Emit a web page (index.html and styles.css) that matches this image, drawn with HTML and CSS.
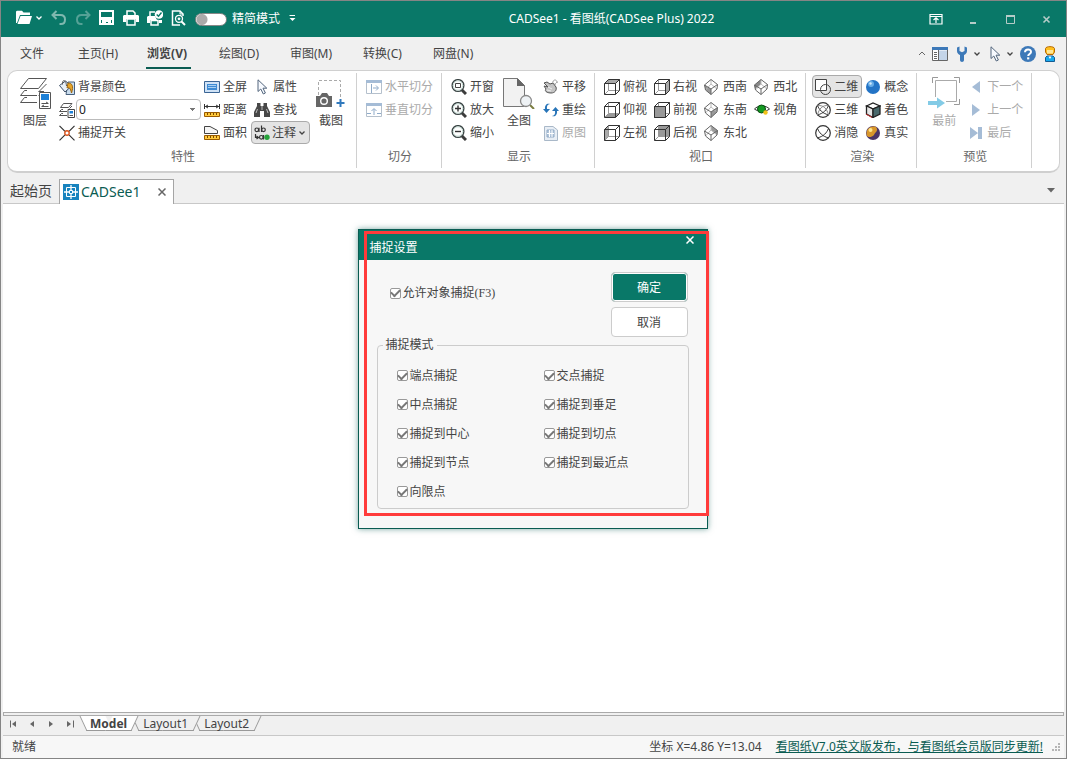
FILE: index.html
```html
<!DOCTYPE html>
<html lang="zh-CN">
<head>
<meta charset="utf-8">
<title>CADSee1 - 看图纸(CADSee Plus) 2022</title>
<link rel="stylesheet" href="styles.css">
</head>
<body>
<svg class="sprite" aria-hidden="true">
  <defs>
    <symbol id="cube" viewBox="0 0 16 16"><path d="M4.500 .5V11.500H15.500M4.500 11.500L.5 15.500" fill="none" stroke="#999"/><path d="M.5 4.500L4.500 .5H15.500V11.500L11.500 15.500H.5ZM.5 4.500H11.500V15.500M11.500 4.500L15.500 .5" fill="none" stroke="#333"/></symbol>
    <symbol id="iso" viewBox="0 0 16 16"><path d="M7 .5V5L1.500 11M7 5L13 10" fill="none" stroke="#bbb"/><path d="M.5 6L7 .5L13.500 5.500L13 10L7 15.500L1.500 11ZM.5 6L7 10L13.500 5.500M7 10V15.500" fill="none" stroke="#666"/></symbol>
    <symbol id="lens" viewBox="0 0 16 16"><path d="M10.500 10.500L15 15" stroke="#3c3c3c" stroke-width="3"/><circle cx="7" cy="6.500" r="5.900" fill="#fff" stroke="#3a4444" stroke-width="1.300"/><circle cx="7" cy="6.500" r="4.700" fill="none" stroke="#b9d4cc" stroke-width=".8"/></symbol>
    <symbol id="layers" viewBox="0 0 32 32"><path d="M9.500 1.500H27.500L19.500 11.500H1.500ZM8 13.500H5.500L1.500 18.500H18M27.500 7L20 14.500M8 20.500H5.500L1.500 25.500H18" fill="#fff" stroke="#555"/><path d="M19.500 14.500L25 14.500M19.500 18.500L21 17" stroke="#555"/></symbol>
    <symbol id="ruler" viewBox="0 0 16 16"><path d="M.5 10.500H15.500V14.500H.5Z" fill="#ffc93c" stroke="#9a5b00"/><path d="M3.500 11V13M6.500 11V13M9.500 11V13M12.500 11V13" stroke="#7b4a00"/></symbol>
    <symbol id="cursor" viewBox="0 0 16 16"><path d="M4 .8V12.500L6.800 10L9.300 15L11.400 14L9 9.200H12.800Z" fill="#f7faff" stroke="#52657c"/></symbol>
    <symbol id="sphere-net" viewBox="0 0 16 16"><circle cx="8" cy="8" r="7.300" fill="#fff" stroke="#333" stroke-width="1.200"/><path d="M2.500 3.500C4.500 8 7 11 13.500 13M13.500 3.500C11.500 8 9 11 2.500 13" fill="none" stroke="#333"/></symbol>
    <symbol id="down" viewBox="0 0 8 8"><path d="M1.500 2.500L4 5L6.500 2.500" fill="none" stroke="currentColor" stroke-width="1.300"/></symbol>
  </defs>
</svg>

<div class="window">
  <header class="titlebar">
    <div class="quick">
      <button class="tool open" aria-label="打开"><svg class="i16" viewBox="0 0 16 16"><path d="M0 2V1.500L1 .8H6L7.500 2.500H14V5H4L1 13H0Z" fill="#fff"/><path d="M4.500 6H16L13.500 14H1.500Z" fill="#fff"/></svg><svg class="i8"><use href="#down"/></svg></button>
      <button class="tool" aria-label="撤销"><svg class="i16" viewBox="0 0 16 16"><path d="M5.500 1L1.500 5L5.500 9M2 5H9.500C12.500 5 14 7 14 9.500C14 12 12.500 14 10 14H8.500" fill="none" stroke="#7fb8af" stroke-width="2"/></svg></button>
      <button class="tool" aria-label="重做"><svg class="i16" viewBox="0 0 16 16"><path d="M10.500 1L14.500 5L10.500 9M14 5H6.500C3.500 5 2 7 2 9.500C2 12 3.500 14 6 14H7.500" fill="none" stroke="#55a196" stroke-width="2"/></svg></button>
      <button class="tool" aria-label="保存"><svg class="i16" viewBox="0 0 16 16"><path d="M1 1H14V14H1Z" fill="none" stroke="#fff" stroke-width="2"/><path d="M1 7H14V10H1ZM3 9H12V15H9V12H7V15H3Z" fill="#fff"/></svg></button>
      <button class="tool" aria-label="打印"><svg class="i16" viewBox="0 0 16 16"><path d="M4 5V1H10L12 3V5" fill="none" stroke="#fff" stroke-width="1.500"/><path d="M1 5H15L16 6V12H13V9H3V12H0V6Z" fill="#fff"/><path d="M4 9H12V15H4Z" fill="none" stroke="#fff" stroke-width="1.500"/></svg></button>
      <button class="tool" aria-label="批量打印"><svg class="i16" viewBox="0 0 16 16"><path d="M3 6V2H8" fill="none" stroke="#fff" stroke-width="1.500"/><path d="M1 6H8L10 10H15V13H12V10H3V13H0V7Z" fill="#fff"/><path d="M4 10.500H11V15H4Z" fill="#097868" stroke="#fff" stroke-width="1.500"/><circle cx="12" cy="4.500" r="4.300" fill="#fff"/><path d="M9.700 4.500L11.500 6.300L14.500 2.500" fill="none" stroke="#097868" stroke-width="1.400"/></svg></button>
      <button class="tool" aria-label="打印预览"><svg class="i16" viewBox="0 0 16 16"><path d="M9 15H1.500V1H9L12 4V6" fill="none" stroke="#fff" stroke-width="1.500"/><path d="M9 1V4H12" fill="none" stroke="#fff"/><circle cx="8" cy="8.800" r="3.500" fill="none" stroke="#fff" stroke-width="1.300"/><circle cx="8" cy="8.800" r="1.400" fill="#fff"/><path d="M10.500 11.500L14 15" stroke="#fff" stroke-width="2"/></svg></button>
      <label class="switch"><input type="checkbox" role="switch">精简模式</label>
      <button class="tool" aria-label="自定义"><svg class="i8" viewBox="0 0 8 8"><path d="M1.500 1.500H7" stroke="#fff"/><path d="M1.500 4H7.500L4.500 7Z" fill="#fff"/></svg></button>
    </div>
    <h1 class="title">CADSee1 - 看图纸(CADSee Plus) 2022</h1>
    <div class="controls">
      <button aria-label="功能区选项"><svg class="i16" viewBox="0 0 16 16"><path d="M2 3.500H14V13H2ZM2 5.500H14M8 12V7M5.500 9L8 6.700L10.500 9" fill="none" stroke="#fff" stroke-width="1.200"/></svg></button>
      <button aria-label="最小化"><svg class="i16" viewBox="0 0 16 16"><path d="M5 12H11" stroke="#b5ccc8" stroke-width="2"/></svg></button>
      <button aria-label="最大化"><svg class="i16" viewBox="0 0 16 16"><path d="M4.500 5.500H12.500V12.500H4.500Z" fill="none" stroke="#b5ccc8"/><path d="M4 5H13" stroke="#b5ccc8" stroke-width="2"/></svg></button>
      <button aria-label="关闭"><svg class="i16" viewBox="0 0 16 16"><path d="M4.500 5.500L10.500 11.500M10.500 5.500L4.500 11.500" stroke="#b5ccc8" stroke-width="1.600"/></svg></button>
    </div>
  </header>

  <nav class="menubar">
    <button class="menu file">文件</button>
    <button class="menu">主页(H)</button>
    <button class="menu active">浏览(V)</button>
    <button class="menu">绘图(D)</button>
    <button class="menu">审图(M)</button>
    <button class="menu">转换(C)</button>
    <button class="menu">网盘(N)</button>
    <div class="menu-tools">
      <button aria-label="折叠功能区"><svg class="i8" viewBox="0 0 8 8"><path d="M1 5L4 2L7 5" fill="none" stroke="#666"/></svg></button>
      <button aria-label="面板"><svg class="i16" viewBox="0 0 16 16"><path d="M.5 1.500H15.500V14.500H.5Z" fill="#fff" stroke="#666"/><path d="M0 1H16V4H0Z" fill="#3d79b8"/><path d="M7 4.500H15V14H7Z" fill="#c4d5e9"/><path d="M2 6.500H5M2 8.500H5M2 10.500H5M2 12.500H5M6.500 4V14" stroke="#666"/></svg></button>
      <button aria-label="工具"><svg class="i16" viewBox="0 0 16 16"><path d="M3 1.500V5C3 7 4.500 8.500 6 9V14C6 16.500 10 16.500 10 14V9C11.500 8.500 13 7 13 5V1.500L10.500 .5V5L8 6.300L5.500 5V.5Z" fill="#3d79b8"/></svg><svg class="i8"><use href="#down"/></svg></button>
      <button aria-label="选择"><svg class="i16"><use href="#cursor"/></svg><svg class="i8"><use href="#down"/></svg></button>
      <button aria-label="帮助"><svg class="i16" viewBox="0 0 16 16"><circle cx="8" cy="8" r="8" fill="#3d79b8"/><path d="M5 6.200C5 2.400 11.200 2.600 11 6C10.900 8 8.200 8 8.200 10" fill="none" stroke="#fff" stroke-width="2"/><path d="M7.100 11.300H9.300V13.400H7.100Z" fill="#fff"/></svg></button>
      <button aria-label="用户"><svg class="i16" viewBox="0 0 16 16"><path d="M3.500 2.500C4 0 12 0 12.500 2.500V6L11 8.500H5L3.500 6Z" fill="#ffc020" stroke="#b86a00"/><path d="M5 4H11V7.500H5Z" fill="#ffe798"/><path d="M5 10H11L12.500 11.500V15.500H3.500V11.500Z" fill="#18a9ee" stroke="#145c92"/><path d="M6.500 10.500H9.500L8 13Z" fill="#fff"/></svg></button>
    </div>
  </nav>

  <section class="ribbon" aria-label="浏览">
    <div class="group">
      <div class="cols">
        <button class="big"><svg class="i32" viewBox="0 0 32 32"><use href="#layers"/><path d="M20.500 15.500H31.500V31.500H20.500Z" fill="#fff" stroke="#555"/><path d="M22 17H30V23H22Z" fill="#1c7fd6"/><path d="M22.500 26.500H29M27 25L29.500 26.500M29.500 29.500H23M25 28L22.500 29.500" fill="none" stroke="#555"/></svg>图层</button>
        <div class="col props">
          <button class="cmd"><svg class="i16" viewBox="0 0 16 16"><path d="M9 3H15.500V15.500H7Z" fill="#c9dced" stroke="#48617d"/><path d="M.5 6.500L6.500 2L12.500 7L6 13Z" fill="#e8f0f8" stroke="#3c4e66"/><path d="M3.500 5.500C3 0 7 0 7.500 7" fill="none" stroke="#555"/><path d="M9 4C13 4 15 7 12.500 14C11.500 9 10 8 8 9Z" fill="#e6a428" stroke="#9a6510"/></svg>背景颜色</button>
          <label class="layer"><svg class="i16" viewBox="0 0 16 16"><path d="M4.500 1.500H13L9.500 5.500H1.500ZM4 7.500H2.500L.5 9.500H8M4 11.500H2.500L.5 13.500H8M13 4L10.500 6.500" fill="none" stroke="#555"/><path d="M9 7.500H15.500V15.500H9Z" fill="#fff" stroke="#444"/><path d="M10.500 9H14V11.500H10.500Z" fill="#1c7fd6"/><path d="M10.500 13.500H14" stroke="#555"/></svg><select class="layer-select" aria-label="图层"><option>0</option></select></label>
          <button class="cmd"><svg class="i16" viewBox="0 0 16 16"><path d="M.5 .8L6 6.300M15.500 .8L10 6.300M.5 15.300L6 9.800M15.500 15.300L10 9.800" stroke="#333" stroke-width="1.200"/><circle cx="8" cy="8" r="2.200" fill="#fff" stroke="#d9541e" stroke-width="1.400"/></svg>捕捉开关</button>
        </div>
        <div class="col">
          <button class="cmd"><svg class="i16" viewBox="0 0 16 16"><path d="M.5 2.500H15.500V13.500H.5Z" fill="#cfe2f6" stroke="#3a6595"/><path d="M3 5H13V11H3Z" fill="#3d8ad4"/><path d="M4 6.500H12M4 8.500H12" stroke="#a9d0f2"/></svg>全屏</button>
          <button class="cmd"><svg class="i16" viewBox="0 0 16 16"><use href="#ruler"/><path d="M.5 2V7M15.500 2V7M1 4.500H15M4 3L1.500 4.500L4 6M12 3L14.500 4.500L12 6" fill="none" stroke="#333"/></svg>距离</button>
          <button class="cmd"><svg class="i16" viewBox="0 0 16 16"><use href="#ruler"/><path d="M.5 8.500V1.500H6L13.500 5.500V8.500Z" fill="#f5f5f5" stroke="#444"/></svg>面积</button>
        </div>
        <div class="col">
          <button class="cmd"><svg class="i16"><use href="#cursor"/></svg>属性</button>
          <button class="cmd"><svg class="i16" viewBox="0 0 16 16"><path d="M3 1H6.500V4H9.500V1H13V4L16 10V15H10V9H6V15H0V10L3 4Z" fill="#484848"/><path d="M3.500 7L2 11M12.500 7L14 11M8 4V8" stroke="#bbb"/></svg>查找</button>
          <button class="cmd pressed note"><svg class="i16" viewBox="0 0 16 16"><g fill="none" stroke="#333" stroke-width="1.200"><circle cx="2.800" cy="4.800" r="1.800"/><path d="M5 2.800V7"/><path d="M7.500 .5V7"/><circle cx="9.500" cy="4.800" r="1.800"/><circle cx="7.300" cy="12.300" r="1.800"/><path d="M9.500 10V14.500M1.500 9V12.500H4M2.500 11L4.500 12.500L2.500 14"/></g><circle cx="13" cy="12.300" r="2.700" fill="#26a33a"/></svg>注释<svg class="i8"><use href="#down"/></svg></button>
        </div>
        <button class="big"><svg class="i32" viewBox="0 0 32 32"><path d="M3.500 18V3.500H25.500V22" fill="none" stroke="#aaa" stroke-dasharray="3 2"/><path d="M1 19H5L7 16H12L14 19H17V30H1Z" fill="#666"/><circle cx="9" cy="24" r="3.300" fill="#666" stroke="#fff" stroke-width="1.400"/><path d="M25.500 22V30M21.500 26H29.500" stroke="#3079bd" stroke-width="2"/></svg>截图</button>
      </div>
      <h2>特性</h2>
    </div>

    <div class="group">
      <div class="cols">
        <div class="col">
          <button class="cmd" disabled><svg class="i16" viewBox="0 0 16 16"><path d="M.5 1.500H15.500V14.500H.5Z" fill="#fff" stroke="#b5c0cc"/><path d="M0 1H16V4H0Z" fill="#a5bcd6"/><path d="M5.500 5V14M7 9H12M10 6.500L12.500 9L10 11.500" fill="none" stroke="#8fabc9"/></svg>水平切分</button>
          <button class="cmd" disabled><svg class="i16" viewBox="0 0 16 16"><path d="M.5 1.500H15.500V14.500H.5Z" fill="#fff" stroke="#b5c0cc"/><path d="M0 1H16V4H0Z" fill="#a5bcd6"/><path d="M1 11.500H5M11 11.500H15M8 13V7M5.500 9L8 6.500L10.500 9" fill="none" stroke="#8fabc9"/></svg>垂直切分</button>
        </div>
      </div>
      <h2>切分</h2>
    </div>

    <div class="group">
      <div class="cols">
        <div class="col">
          <button class="cmd"><svg class="i16" viewBox="0 0 16 16"><use href="#lens"/><path d="M4.500 4.500H9.500V8.500H4.500Z" fill="none" stroke="#444"/></svg>开窗</button>
          <button class="cmd"><svg class="i16" viewBox="0 0 16 16"><use href="#lens"/><path d="M4 6.500H10M7 3.500V9.500" stroke="#333" stroke-width="1.400"/></svg>放大</button>
          <button class="cmd"><svg class="i16" viewBox="0 0 16 16"><use href="#lens"/><path d="M4 6.500H10" stroke="#333" stroke-width="1.400"/></svg>缩小</button>
        </div>
        <button class="big"><svg class="i32" viewBox="0 0 32 32"><path d="M.5 1.500H14.500L21.500 8.500V29.500H.5Z" fill="#f2f2f2" stroke="#777"/><path d="M14 1L22 9H14Z" fill="#666"/><path d="M27 28L31 32" stroke="#7b7d40" stroke-width="2"/><circle cx="23" cy="24" r="5.500" fill="#eef2f5" stroke="#888" stroke-width="1.300"/></svg>全图</button>
        <div class="col">
          <button class="cmd"><svg class="i16" viewBox="0 0 16 16"><path d="M1 4L4 3L7 5L10 4L13 8C14 11 12 14 8 14C4 14 1 12 3 10L1 7L5 8Z" fill="#c4c4c4" stroke="#555"/><path d="M5 8L9 10M4 11L8 12" stroke="#eee"/><circle cx="12" cy="3" r="2" fill="#fff" stroke="#555" stroke-dasharray="1 1"/></svg>平移</button>
          <button class="cmd"><svg class="i16" viewBox="0 0 16 16"><path d="M7 2C4.500 2.500 3.500 4 4 7H7L3.500 11L0 7H2C1.500 3 4 1 7 2ZM9 14C11.500 13.500 12.500 12 12 9H9L12.500 5L16 9H14C14.500 13 12 15 9 14Z" fill="#2774b8"/></svg>重绘</button>
          <button class="cmd" disabled><svg class="i16" viewBox="0 0 16 16"><path d="M1.500 1.500H10L14.500 5V15.500H1.500Z" fill="#e8eef5" stroke="#a9b8c8"/><path d="M4 5H11V12H4Z" fill="#b3c6db" stroke="#93acc7"/><path d="M6.500 5V12M9 5V12M4 8.500H11" stroke="#fff"/></svg>原图</button>
        </div>
      </div>
      <h2>显示</h2>
    </div>

    <div class="group">
      <div class="cols">
        <div class="col">
          <button class="cmd"><svg class="i16" viewBox="0 0 16 16"><path d="M.5 4.500L4.500 .5H15.500L11.500 4.500Z" fill="#aaa"/><use href="#cube"/></svg>俯视</button>
          <button class="cmd"><svg class="i16" viewBox="0 0 16 16"><path d="M.5 15.500L4.500 11.500H15.500L11.500 15.500Z" fill="#999"/><use href="#cube"/></svg>仰视</button>
          <button class="cmd"><svg class="i16" viewBox="0 0 16 16"><path d="M.5 4.500L4.500 .5V11.500L.5 15.500Z" fill="#aaa"/><use href="#cube"/></svg>左视</button>
        </div>
        <div class="col">
          <button class="cmd"><svg class="i16" viewBox="0 0 16 16"><path d="M11.500 4.500L15.500 .5V11.500L11.500 15.500Z" fill="#aaa"/><use href="#cube"/></svg>右视</button>
          <button class="cmd"><svg class="i16" viewBox="0 0 16 16"><use href="#cube"/><path d="M.5 4.500H11.500V15.500H.5Z" fill="#999" stroke="#333"/></svg>前视</button>
          <button class="cmd"><svg class="i16" viewBox="0 0 16 16"><path d="M4.500 .5H15.500V11.500H4.500Z" fill="#999"/><use href="#cube"/></svg>后视</button>
        </div>
        <div class="col">
          <button class="cmd"><svg class="i16" viewBox="0 0 16 16"><path d="M.5 6L7 10V15.500L1.500 11Z" fill="#999"/><use href="#iso"/></svg>西南</button>
          <button class="cmd"><svg class="i16" viewBox="0 0 16 16"><path d="M13.500 5.500L7 10V15.500L13 10Z" fill="#999"/><use href="#iso"/></svg>东南</button>
          <button class="cmd"><svg class="i16" viewBox="0 0 16 16"><path d="M7 .5L13.500 5.500L13 10L7 5Z" fill="#999"/><use href="#iso"/></svg>东北</button>
        </div>
        <div class="col">
          <button class="cmd"><svg class="i16" viewBox="0 0 16 16"><path d="M7 .5L.5 6L1 10L7 5Z" fill="#888"/><use href="#iso"/></svg>西北</button>
          <button class="cmd"><svg class="i16" viewBox="0 0 16 16"><path d="M.5 7C4 3 12 3 15.500 7C12 10 4 10 .5 7Z" fill="#fff" stroke="#333"/><circle cx="7.500" cy="7" r="4" fill="#149a22" stroke="#0a4d12"/><circle cx="11.500" cy="10.500" r="2.200" fill="#f2c21a"/></svg>视角</button>
        </div>
      </div>
      <h2>视口</h2>
    </div>

    <div class="group">
      <div class="cols">
        <div class="col">
          <button class="cmd pressed"><svg class="i16" viewBox="0 0 16 16"><path d="M.5 .5H11.500V11.500H.5Z" fill="#fff" stroke="#444"/><circle cx="10.500" cy="10.500" r="5" fill="none" stroke="#444"/></svg>二维</button>
          <button class="cmd"><svg class="i16" viewBox="0 0 16 16"><use href="#sphere-net"/><path d="M2.500 13C4 7 7 3 13.500 3.500M13.500 13C12 7 9 3 2.500 3.500" fill="none" stroke="#888"/></svg>三维</button>
          <button class="cmd"><svg class="i16"><use href="#sphere-net"/></svg>消隐</button>
        </div>
        <div class="col">
          <button class="cmd"><svg class="i16" viewBox="0 0 16 16"><circle cx="8" cy="8" r="7" fill="#2374c6"/><circle cx="6" cy="5" r="3" fill="#69aee8"/><circle cx="5.500" cy="4.500" r="1.200" fill="#d3e9fb"/></svg>概念</button>
          <button class="cmd"><svg class="i16" viewBox="0 0 16 16"><path d="M1.500 4L8 1L15 4L8 7Z" fill="#fff" stroke="#222" stroke-width="1.300"/><path d="M1.500 4V12L8 15.500V7Z" fill="#e5e5e5" stroke="#222" stroke-width="1.300"/><path d="M15 4V12L8 15.500V7Z" fill="#49686b" stroke="#222" stroke-width="1.300"/><path d="M1 12L7 15.500" stroke="#c63131"/></svg>着色</button>
          <button class="cmd"><svg class="i16" viewBox="0 0 16 16"><circle cx="8" cy="8" r="7" fill="#4b3568"/><path d="M2 11C0 5 5 0 11 2C14 6 10 7 9 10C6 13 3 12 2 11Z" fill="#d8962b"/><circle cx="5.500" cy="5" r="2" fill="#ffe58c"/></svg>真实</button>
        </div>
      </div>
      <h2>渲染</h2>
    </div>

    <div class="group">
      <div class="cols">
        <button class="big" disabled><svg class="i32" viewBox="0 0 32 32"><path d="M4.500 6V.5H10M26 .5H31.500V6M31.500 22V27.500H26" fill="none" stroke="#999"/><path d="M7.500 20V3.500H28.500V24.500H18" fill="none" stroke="#aaa"/><path d="M0 24H9V20.500L17 26L9 31.500V28H0Z" fill="#83cbe6"/></svg>最前</button>
        <div class="col">
          <button class="cmd" disabled><svg class="i16" viewBox="0 0 16 16"><path d="M12 2V14L4 8Z" fill="#a5bcd6"/></svg>下一个</button>
          <button class="cmd" disabled><svg class="i16" viewBox="0 0 16 16"><path d="M4 2V14L12 8Z" fill="#a5bcd6"/></svg>上一个</button>
          <button class="cmd" disabled><svg class="i16" viewBox="0 0 16 16"><path d="M2 2V14L10 8ZM10 2H14V14H10Z" fill="#a5bcd6"/></svg>最后</button>
        </div>
      </div>
      <h2>预览</h2>
    </div>
  </section>

  <nav class="doc-tabs">
    <button class="doc-tab">起始页</button>
    <div class="doc-tab current"><button class="doc-name"><svg class="i16" viewBox="0 0 16 16"><path d="M0 0H16V16H0Z" fill="#1783be"/><path d="M3.500 3.500H12.500V12.500H3.500Z" fill="none" stroke="#fff"/><path d="M8 1V6M8 10V15M1 8H6M10 8H15" stroke="#fff" stroke-width="1.300" stroke-dasharray="2 1"/><path d="M6.500 6.500H9.500V9.500H6.500Z" fill="#1783be" stroke="#fff"/></svg>CADSee1</button><button class="doc-close" aria-label="关闭标签"><svg class="i8" viewBox="0 0 8 8"><path d="M.5 .5L7.500 7.500M7.500 .5L.5 7.500" stroke="#666" stroke-width="1.500"/></svg></button></div>
    <button class="doc-list" aria-label="文档列表"><svg class="i8" viewBox="0 0 8 8"><path d="M0 2H8L4 6.500Z" fill="#666"/></svg></button>
  </nav>

  <main class="canvas">
    <form class="dialog" role="dialog" aria-labelledby="snap-title">
      <div class="dialog-head"><h2 id="snap-title">捕捉设置</h2><button type="button" class="dialog-close" aria-label="关闭"><svg class="i8" viewBox="0 0 8 8"><path d="M.5 .5L7.500 7.500M7.500 .5L.5 7.500" stroke="#fff" stroke-width="1.500"/></svg></button></div>
      <div class="dialog-body">
        <div class="dialog-top">
          <label class="check"><input type="checkbox" checked>允许对象捕捉(F3)</label>
          <div class="actions"><button type="button" class="btn primary">确定</button><button type="button" class="btn">取消</button></div>
        </div>
        <fieldset class="modes">
          <legend>捕捉模式</legend>
          <label class="check"><input type="checkbox" checked>端点捕捉</label>
          <label class="check"><input type="checkbox" checked>交点捕捉</label>
          <label class="check"><input type="checkbox" checked>中点捕捉</label>
          <label class="check"><input type="checkbox" checked>捕捉到垂足</label>
          <label class="check"><input type="checkbox" checked>捕捉到中心</label>
          <label class="check"><input type="checkbox" checked>捕捉到切点</label>
          <label class="check"><input type="checkbox" checked>捕捉到节点</label>
          <label class="check"><input type="checkbox" checked>捕捉到最近点</label>
          <label class="check"><input type="checkbox" checked>向限点</label>
        </fieldset>
      </div>
      <div class="highlight"></div>
    </form>
  </main>

  <div class="splitter"></div>
  <nav class="sheets">
    <div class="sheet-nav">
      <button aria-label="第一页"><svg class="i8" viewBox="0 0 8 8"><path d="M1.500 .5V7.500" stroke="#666"/><path d="M7 1V7L3 4Z" fill="#666"/></svg></button>
      <button aria-label="上一页"><svg class="i8" viewBox="0 0 8 8"><path d="M6 1V7L2 4Z" fill="#666"/></svg></button>
      <button aria-label="下一页"><svg class="i8" viewBox="0 0 8 8"><path d="M2 1V7L6 4Z" fill="#666"/></svg></button>
      <button aria-label="最后一页"><svg class="i8" viewBox="0 0 8 8"><path d="M7.500 .5V7.500" stroke="#666"/><path d="M1 1V7L5 4Z" fill="#666"/></svg></button>
    </div>
    <button class="sheet current">Model</button>
    <button class="sheet second">Layout1</button>
    <button class="sheet">Layout2</button>
  </nav>

  <footer class="status">
    <span class="ready">就绪</span>
    <span class="coords">坐标 X=4.86 Y=13.04</span>
    <a class="news" href="#">看图纸V7.0英文版发布，与看图纸会员版同步更新!</a>
    <svg class="i8" viewBox="0 0 8 8"><path d="M6 0H8V2H6ZM3 3H5V5H3ZM6 3H8V5H6ZM0 6H2V8H0ZM3 6H5V8H3ZM6 6H8V8H6Z" fill="#b5b5b5"/></svg>
  </footer>
</div>
</body>
</html>
```
FILE: styles.css
```css
* { box-sizing: border-box; }

body {
  margin: 0;
  color: #444;
  font: 12px/16px "Noto Sans", "Noto Sans CJK SC", sans-serif;
}

button {
  display: flex;
  align-items: center;
  margin: 0;
  padding: 0;
  border: 0;
  background: none;
  color: inherit;
  font: inherit;
  white-space: nowrap;
}

h1, h2 { margin: 0; font: inherit; }

svg { display: block; flex: none; }
.sprite { position: absolute; width: 0; height: 0; }
.i8 { width: 8px; height: 8px; }
.i16 { width: 16px; height: 16px; }
.i32 { width: 32px; height: 32px; }

.window {
  display: flex;
  flex-direction: column;
  height: 100vh;
  border: 1px solid #858585;
  background: #f0f0f0;
}

/* Title bar */
.titlebar {
  display: grid;
  grid-template-columns: 1fr auto 1fr;
  align-items: center;
  height: 36px;
  flex: none;
  padding: 0 11px 0 15px;
  background: #097868;
  color: #fff;
}
.quick { display: flex; align-items: center; gap: 8px; }
.quick .tool { margin-top: -2px; }
.open { gap: 3px; }
.title { padding-left: 152px; white-space: nowrap; }
.switch { display: flex; align-items: center; gap: 5px; white-space: nowrap; }
.switch input {
  appearance: none;
  width: 32px;
  height: 13px;
  margin: 0;
  border: 1px solid #888;
  border-radius: 7px;
  background: radial-gradient(circle at 6px 50%, #aaa 5px, #fff 6px);
}
.controls { display: flex; justify-content: flex-end; gap: 21px; }

/* Menu tabs */
.menubar {
  display: flex;
  align-items: center;
  height: 33px;
  flex: none;
  padding: 0 8px 0 4px;
}
.menu { height: 30px; padding: 0 16px 0 15px; }
.file { margin-right: 3px; }
.active {
  margin: 0 13px 0 12px;
  padding: 3px 4px 0 1px;
  border-bottom: 2px solid #0a5c52;
  font-weight: bold;
}
.menu-tools { display: flex; gap: 6px; margin-left: auto; }
.menu-tools button { gap: 3px; }

/* Ribbon */
.ribbon {
  display: flex;
  flex: none;
  margin: 0 6px;
  padding: 2px 0 3px;
  border: 1px solid #d0d0d0;
  border-bottom: 2px solid #cfcfcf;
  border-radius: 10px;
  background: #fff;
}
.group { padding: 2px 4px 0 6px; border-right: 1px solid #d0d0d0; }
.group h2 { height: 24px; padding-top: 5px; color: #666; text-align: center; }
.cols { display: flex; height: 69px; }
.col { display: grid; grid-template-rows: repeat(3, 23px); align-content: start; }
.props { width: 145px; }
.cmd { gap: 3px; padding: 0 3px 0 2px; border: 1px solid transparent; border-radius: 4px; }
.cmd:disabled, .big:disabled { color: #aaa; }
.pressed { border-color: #aaa; background: #e4e4e4; }
.note { gap: 2px; }
.big { flex-direction: column; gap: 4px; padding: 2px 5px 0; }
.layer { display: flex; align-items: center; gap: 1px; padding-left: 3px; }
.layer-select {
  appearance: none;
  flex: 1;
  height: 21px;
  padding: 0 2px;
  border: 1px solid #bbb;
  border-radius: 4px;
  background: conic-gradient(from -45deg at 50% 100%, #777 90deg, transparent 0) right 5px center / 6px 3px no-repeat #fff;
  color: #222;
  font: inherit;
}

/* Document tabs */
.doc-tabs {
  display: flex;
  align-items: flex-end;
  height: 31px;
  flex: none;
  margin: 0 2px;
  border-bottom: 1px solid #c8c8c8;
  font-size: 14px;
}
.doc-tab { height: 24px; padding: 0 7px; }
.doc-name { gap: 2px; color: #0a5c52; }
.current.doc-tab {
  display: flex;
  gap: 17px;
  height: 25px;
  margin-bottom: -1px;
  padding: 0 7px 0 3px;
  border: 1px solid #a5a5a5;
  border-bottom: 0;
  background: #fff;
}
.doc-list { height: 26px; margin-left: auto; padding-right: 9px; }

/* Drawing area and dialog */
.canvas { flex: 1; min-height: 0; margin: 0 2px; padding-right: 2px; background: #fff; }
.dialog {
  position: relative;
  width: 350px;
  margin: 25px auto 0;
  border: 1px solid #0a5c52;
  background: #f7f7f7;
  box-shadow: 0 0 6px #0a5c5288;
  font-family: "Liberation Serif", "Noto Sans CJK SC", sans-serif;
}
.dialog-head {
  display: flex;
  justify-content: space-between;
  align-items: flex-start;
  height: 30px;
  padding: 6px 13px 0 11px;
  background: #097868;
  color: #fff;
}
.dialog-head h2 { padding-top: 4px; }
.dialog-body { padding: 12px 18px 19px; }
.dialog-top { display: flex; justify-content: space-between; padding: 0 1px 0 13px; }
.dialog-top .check { height: 42px; }
.actions { display: grid; gap: 5px; }
.check { display: flex; align-items: center; gap: 2px; white-space: nowrap; }
.check input {
  appearance: none;
  width: 11px;
  height: 11px;
  margin: 0;
  border: 1px solid #999;
  border-radius: 2px;
  background: #fff;
  display: grid;
  place-items: center;
}
.check input:checked::before {
  content: "";
  width: 7px;
  height: 4px;
  margin-bottom: 2px;
  border: solid #777;
  border-width: 0 0 2px 2px;
  transform: rotate(-45deg);
}
.btn {
  justify-content: center;
  width: 77px;
  height: 30px;
  padding-top: 1px;
  border: 1px solid #ccc;
  border-radius: 4px;
  background: #fff;
}
.primary { background: #097868; color: #fff; box-shadow: inset 0 0 0 1px #fff; }
.modes {
  display: grid;
  grid-template-columns: 147px 1fr;
  grid-auto-rows: 29px;
  margin: 0;
  padding: 8px 0 2px 19px;
  border: 1px solid #ccc;
  border-radius: 4px;
}
.modes legend { margin-left: -14px; padding: 0 3px; }
.highlight {
  position: absolute;
  inset: 1px -2px 12px 5px;
  border: 3px solid #ff3b3b;
  pointer-events: none;
}

/* Layout sheets */
.splitter { height: 4px; flex: none; margin: 0 2px; border: 1px solid #aaa; }
.sheets { display: flex; height: 19px; flex: none; isolation: isolate; }
.sheet-nav { display: flex; gap: 11px; height: 15px; padding: 0 9px 0 8px; }
.sheet { position: relative; height: 15px; padding: 0 8px; isolation: isolate; }
.sheet::before, .sheet::after {
  content: "";
  position: absolute;
  z-index: -1;
  inset: 0 50% 0 0;
  border: solid #999;
  border-width: 0 0 1px 1px;
  background: #f0f0f0;
  transform: skewX(25deg);
}
.sheet::after { inset: 0 0 0 50%; border-width: 0 1px 1px 0; transform: skewX(-25deg); }
.sheet.current { z-index: 2; padding: 0 8px 0 7px; font-weight: bold; }
.sheet.current::before, .sheet.current::after { background: #fff; }
.second { z-index: 1; }

/* Status bar */
.status {
  display: flex;
  align-items: center;
  height: 23px;
  flex: none;
  margin: 0 2px;
  padding: 0 4px 0 9px;
  border-top: 1px solid #c8c8c8;
  background: #f7f7f7;
  white-space: nowrap;
}
.coords { margin-left: auto; }
.news { margin: 0 9px 0 14px; color: #0a5c52; }
```
